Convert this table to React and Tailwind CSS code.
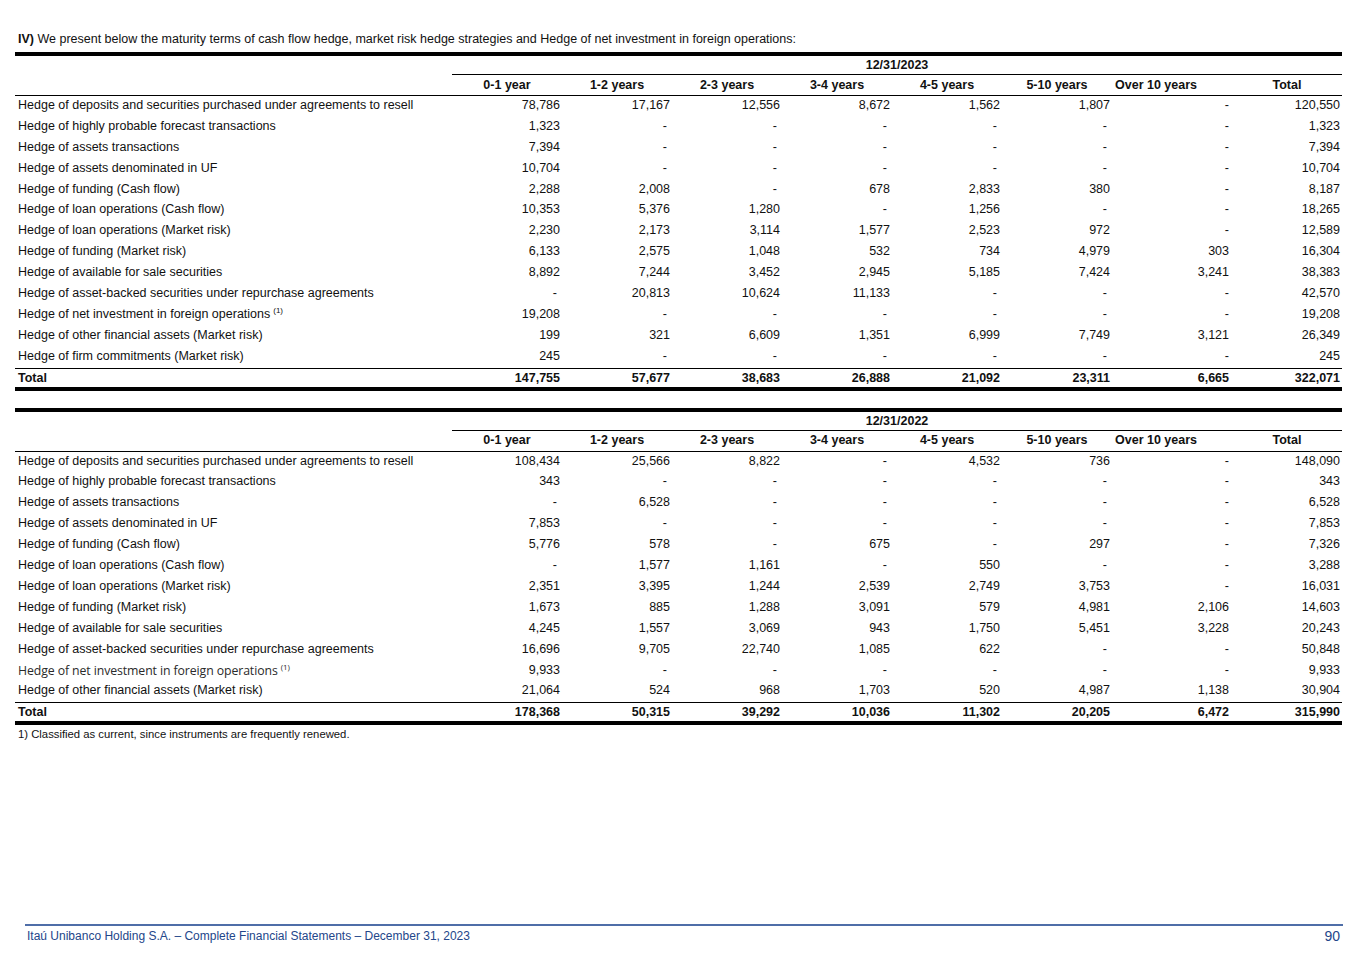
import React from 'react';

const cols = ['0-1 year', '1-2 years', '2-3 years', '3-4 years', '4-5 years', '5-10 years', 'Over 10 years', 'Total'];

const rows2023 = [
  ['Hedge of deposits and securities purchased under agreements to resell', '78,786', '17,167', '12,556', '8,672', '1,562', '1,807', '-', '120,550'],
  ['Hedge of highly probable forecast transactions', '1,323', '-', '-', '-', '-', '-', '-', '1,323'],
  ['Hedge of assets transactions', '7,394', '-', '-', '-', '-', '-', '-', '7,394'],
  ['Hedge of assets denominated in UF', '10,704', '-', '-', '-', '-', '-', '-', '10,704'],
  ['Hedge of funding (Cash flow)', '2,288', '2,008', '-', '678', '2,833', '380', '-', '8,187'],
  ['Hedge of loan operations (Cash flow)', '10,353', '5,376', '1,280', '-', '1,256', '-', '-', '18,265'],
  ['Hedge of loan operations (Market risk)', '2,230', '2,173', '3,114', '1,577', '2,523', '972', '-', '12,589'],
  ['Hedge of funding (Market risk)', '6,133', '2,575', '1,048', '532', '734', '4,979', '303', '16,304'],
  ['Hedge of available for sale securities', '8,892', '7,244', '3,452', '2,945', '5,185', '7,424', '3,241', '38,383'],
  ['Hedge of asset-backed securities under repurchase agreements', '-', '20,813', '10,624', '11,133', '-', '-', '-', '42,570'],
  ['Hedge of net investment in foreign operations', '19,208', '-', '-', '-', '-', '-', '-', '19,208', 'sup'],
  ['Hedge of other financial assets (Market risk)', '199', '321', '6,609', '1,351', '6,999', '7,749', '3,121', '26,349'],
  ['Hedge of firm commitments (Market risk)', '245', '-', '-', '-', '-', '-', '-', '245'],
];
const total2023 = ['147,755', '57,677', '38,683', '26,888', '21,092', '23,311', '6,665', '322,071'];

const rows2022 = [
  ['Hedge of deposits and securities purchased under agreements to resell', '108,434', '25,566', '8,822', '-', '4,532', '736', '-', '148,090'],
  ['Hedge of highly probable forecast transactions', '343', '-', '-', '-', '-', '-', '-', '343'],
  ['Hedge of assets transactions', '-', '6,528', '-', '-', '-', '-', '-', '6,528'],
  ['Hedge of assets denominated in UF', '7,853', '-', '-', '-', '-', '-', '-', '7,853'],
  ['Hedge of funding (Cash flow)', '5,776', '578', '-', '675', '-', '297', '-', '7,326'],
  ['Hedge of loan operations (Cash flow)', '-', '1,577', '1,161', '-', '550', '-', '-', '3,288'],
  ['Hedge of loan operations (Market risk)', '2,351', '3,395', '1,244', '2,539', '2,749', '3,753', '-', '16,031'],
  ['Hedge of funding (Market risk)', '1,673', '885', '1,288', '3,091', '579', '4,981', '2,106', '14,603'],
  ['Hedge of available for sale securities', '4,245', '1,557', '3,069', '943', '1,750', '5,451', '3,228', '20,243'],
  ['Hedge of asset-backed securities under repurchase agreements', '16,696', '9,705', '22,740', '1,085', '622', '-', '-', '50,848'],
  ['Hedge of net investment in foreign operations', '9,933', '-', '-', '-', '-', '-', '-', '9,933', 'alt'],
  ['Hedge of other financial assets (Market risk)', '21,064', '524', '968', '1,703', '520', '4,987', '1,138', '30,904'],
];
const total2022 = ['178,368', '50,315', '39,292', '10,036', '11,302', '20,205', '6,472', '315,990'];

const grid = 'grid grid-cols-[437px_repeat(6,110px)_120px_110px]';

const Num = ({ v, i }) => {
  const dash = v === '-';
  const pad = i === 6 ? 'pr-[3px]' : dash ? 'pr-[5px]' : 'pr-[2px]';
  return <div className={`text-right ${pad}`}>{v}</div>;
};

const Label = ({ text, kind }) => {
  if (kind === 'alt') {
    return (
      <div className="pl-[3px] pt-[3px] text-[#2a2a2a] font-['Open_Sans',sans-serif] text-[12.3px] tracking-[-0.1px]">
        {text} <sup className="text-[8px] top-[-5px]">(1)</sup>
      </div>
    );
  }
  return (
    <div className="pl-[3px]">
      {text}
      {kind === 'sup' && <sup className="ml-[3px] text-[8px] top-[-5px]">(1)</sup>}
    </div>
  );
};

const HedgeTable = ({ date, rows, total }) => (
  <div className="w-[1327px]">
    <div className="h-[4px] bg-black" />
    <div className={`${grid} h-[19px] items-center`}>
      <div />
      <div className="col-span-8 text-center font-bold border-b border-black h-[19px] leading-[18px]">{date}</div>
    </div>
    <div className={`${grid} h-[21px] items-center font-bold border-b border-black`}>
      <div />
      {cols.map((c, i) => (
        <div key={c} className={i === 6 ? 'pl-[3px]' : 'text-center'}>{c}</div>
      ))}
    </div>
    {rows.map((r) => (
      <div key={r[0]} className={`${grid} h-[20.9px] items-center leading-[16px] pb-[3px]`}>
        <Label text={r[0]} kind={r[9]} />
        {r.slice(1, 9).map((v, i) => (
          <Num key={i} v={v} i={i} />
        ))}
      </div>
    ))}
    <div className={`${grid} h-[19px] items-center font-bold border-t border-black`}>
      <div className="pl-[3px]">Total</div>
      {total.map((v, i) => (
        <Num key={i} v={v} i={i} />
      ))}
    </div>
    <div className="h-[4px] bg-black" />
  </div>
);

export default function App() {
  return (
    <div className="w-[1370px] h-[967px] flex flex-col bg-white text-[#111] font-['Liberation_Sans',Arial,sans-serif] text-[12.5px]">
      <div className="pt-[31px] pl-[18px] leading-[16px]">
        <span className="font-bold">IV)</span> We present below the maturity terms of cash flow hedge, market risk hedge strategies and Hedge of net investment in foreign operations:
      </div>
      <div className="pl-[15px] pt-[5px]">
        <HedgeTable date="12/31/2023" rows={rows2023} total={total2023} />
      </div>
      <div className="pl-[15px] pt-[17px]">
        <HedgeTable date="12/31/2022" rows={rows2022} total={total2022} />
      </div>
      <div className="pl-[18px] pt-[2px] text-[11.3px] leading-[14px]">1) Classified as current, since instruments are frequently renewed.</div>
      <div className="mt-auto mb-[23px] ml-[25px] w-[1318px]">
        <div className="h-[2px] bg-[#4f6ea8]" />
        <div className="flex justify-between items-center pl-[2px] pr-[3px] pt-[2px] text-[#23468a] text-[12px] leading-[16px]">
          <span>Itaú Unibanco Holding S.A. – Complete Financial Statements – December 31, 2023</span>
          <span className="text-[14px]">90</span>
        </div>
      </div>
    </div>
  );
}
